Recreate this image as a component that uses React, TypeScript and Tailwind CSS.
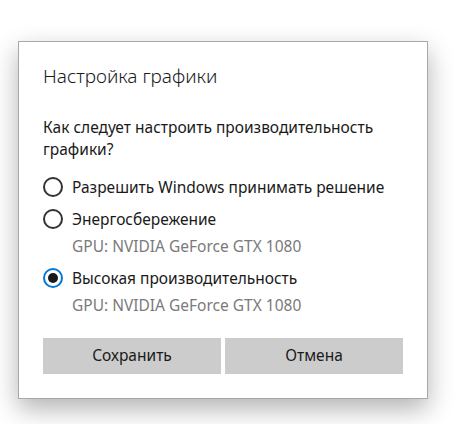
import { useState } from 'react'

const OPTIONS = [
  { id: 'auto', label: 'Разрешить Windows принимать решение' },
  { id: 'save', label: 'Энергосбережение', gpu: 'GPU: NVIDIA GeForce GTX 1080' },
  { id: 'high', label: 'Высокая производительность', gpu: 'GPU: NVIDIA GeForce GTX 1080' },
]

function Radio({ checked }: { checked: boolean }) {
  return checked ? (
    <span className="flex h-5 w-5 shrink-0 items-center justify-center rounded-full border-2 border-[#0078d7]">
      <span className="h-2.5 w-2.5 rounded-full bg-[#1a1a1a]" />
    </span>
  ) : (
    <span className="h-5 w-5 shrink-0 rounded-full border-2 border-[#333333]" />
  )
}

export default function App() {
  const [choice, setChoice] = useState('high')

  return (
    <div className="h-[424px] w-[460px] bg-white pl-[18px] pt-[41px] font-['Noto_Sans',sans-serif] text-[#1a1a1a]">
      <div className="w-[410px] h-[358px] border border-[#a8a8a8] bg-white pl-6 pr-6 shadow-[0_10px_24px_rgba(0,0,0,0.3)]">
        <h1 className="mt-[20px] text-[19px] font-light leading-7">Настройка графики</h1>

        <p className="mt-[26px] text-[15.5px] leading-[22px]">
          Как следует настроить производительность графики?
        </p>

        <div className="mt-[11px] flex flex-col">
          {OPTIONS.map((o) => (
            <button
              key={o.id}
              onClick={() => setChoice(o.id)}
              className="flex flex-col items-start py-[5px] text-left"
            >
              <span className="flex items-center gap-[9px]">
                <Radio checked={choice === o.id} />
                <span className="text-[15.5px] leading-[22px]">{o.label}</span>
              </span>
              {o.gpu && (
                <span className="mt-[5px] pl-[29px] text-[15.5px] leading-[22px] text-[#7a7a7a]">{o.gpu}</span>
              )}
            </button>
          ))}
        </div>

        <div className="mt-[17px] flex gap-1">
          <button className="h-[36px] flex-1 bg-[#cccccc] text-[15.5px]">Сохранить</button>
          <button className="h-[36px] flex-1 bg-[#cccccc] text-[15.5px]">Отмена</button>
        </div>
      </div>
    </div>
  )
}
